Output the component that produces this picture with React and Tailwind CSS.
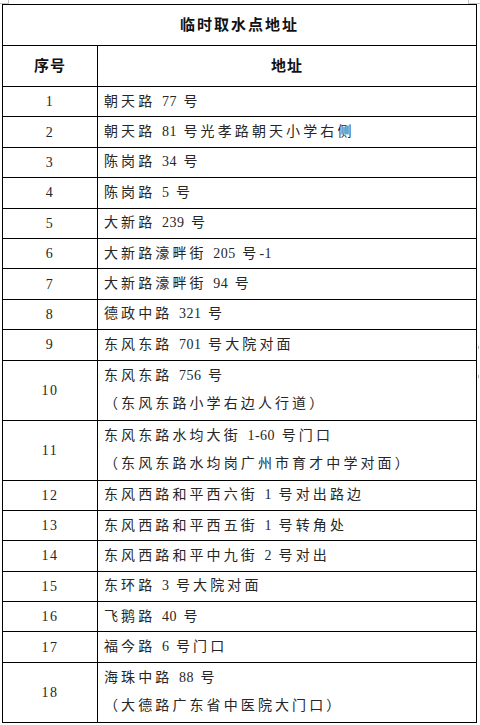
import React from "react";

const rows = [
  ["1", ["朝天路 77 号"]],
  ["2", ["朝天路 81 号光孝路朝天小学右侧"]],
  ["3", ["陈岗路 34 号"]],
  ["4", ["陈岗路 5 号"]],
  ["5", ["大新路 239 号"]],
  ["6", ["大新路濠畔街 205 号-1"]],
  ["7", ["大新路濠畔街 94 号"]],
  ["8", ["德政中路 321 号"]],
  ["9", ["东风东路 701 号大院对面"]],
  ["10", ["东风东路 756 号", "（东风东路小学右边人行道）"]],
  ["11", ["东风东路水均大街 1-60 号门口", "（东风东路水均岗广州市育才中学对面）"]],
  ["12", ["东风西路和平西六街 1 号对出路边"]],
  ["13", ["东风西路和平西五街 1 号转角处"]],
  ["14", ["东风西路和平中九街 2 号对出"]],
  ["15", ["东环路 3 号大院对面"]],
  ["16", ["飞鹅路 40 号"]],
  ["17", ["福今路 6 号门口"]],
  ["18", ["海珠中路 88 号", "（大德路广东省中医院大门口）"]],
];

function Line({ text }) {
  const parts = text.split(/([0-9\-]+)/).filter((p) => p.length);
  return (
    <div className="leading-[28px] whitespace-nowrap">
      {parts.map((p, i) =>
        /^[0-9\-]+$/.test(p) ? (
          <span key={i} className="tracking-[0.5px]">{p}</span>
        ) : (
          <span key={i} className="tracking-[3.1px]">{p}</span>
        )
      )}
    </div>
  );
}

export default function App() {
  return (
    <div
      className="relative w-[480px] h-[725px] bg-white pt-[4px] pl-[2px] text-[#262626]"
      style={{ fontFamily: '"Liberation Serif", "Noto Sans CJK SC", serif' }}
    >
      <div className="absolute left-0 top-0 w-[9px] h-[4px] border-r border-b border-[#c4c4c4]" />
      <div className="absolute left-[468px] top-0 w-[12px] h-[4px] border-l border-b border-[#c4c4c4]" />
      <div className="absolute left-[478px] top-[346px] w-[1px] h-[3px] bg-[#b0b0b0]" />
      <div className="absolute left-[478px] top-[375px] w-[1px] h-[3px] bg-[#b0b0b0]" />

      <div className="w-[475px] border border-black">
        <div className="h-[40px] flex items-center justify-center font-bold text-[15px] tracking-[2px] text-[#111]">
          临时取水点地址
        </div>
        <div className="h-[41px] flex border-t border-black font-bold text-[15px] text-[#111]">
          <div className="w-[95px] shrink-0 border-r border-black flex items-center justify-center tracking-[1px]">
            序号
          </div>
          <div className="flex-1 flex items-center justify-center tracking-[1px]">地址</div>
        </div>
        {rows.map(([n, lines]) => (
          <div
            key={n}
            className={
              "flex border-t border-black text-[14px] " +
              (lines.length > 1 ? "h-[60px]" : "h-[30.4px]")
            }
          >
            <div className="w-[95px] shrink-0 border-r border-black flex items-center justify-center tracking-[1.5px]">
              {n}
            </div>
            <div className="flex-1 flex flex-col justify-center pl-[6px]">
              {lines.map((l, i) => (
                <Line key={i} text={l} />
              ))}
            </div>
          </div>
        ))}
      </div>
    </div>
  );
}
